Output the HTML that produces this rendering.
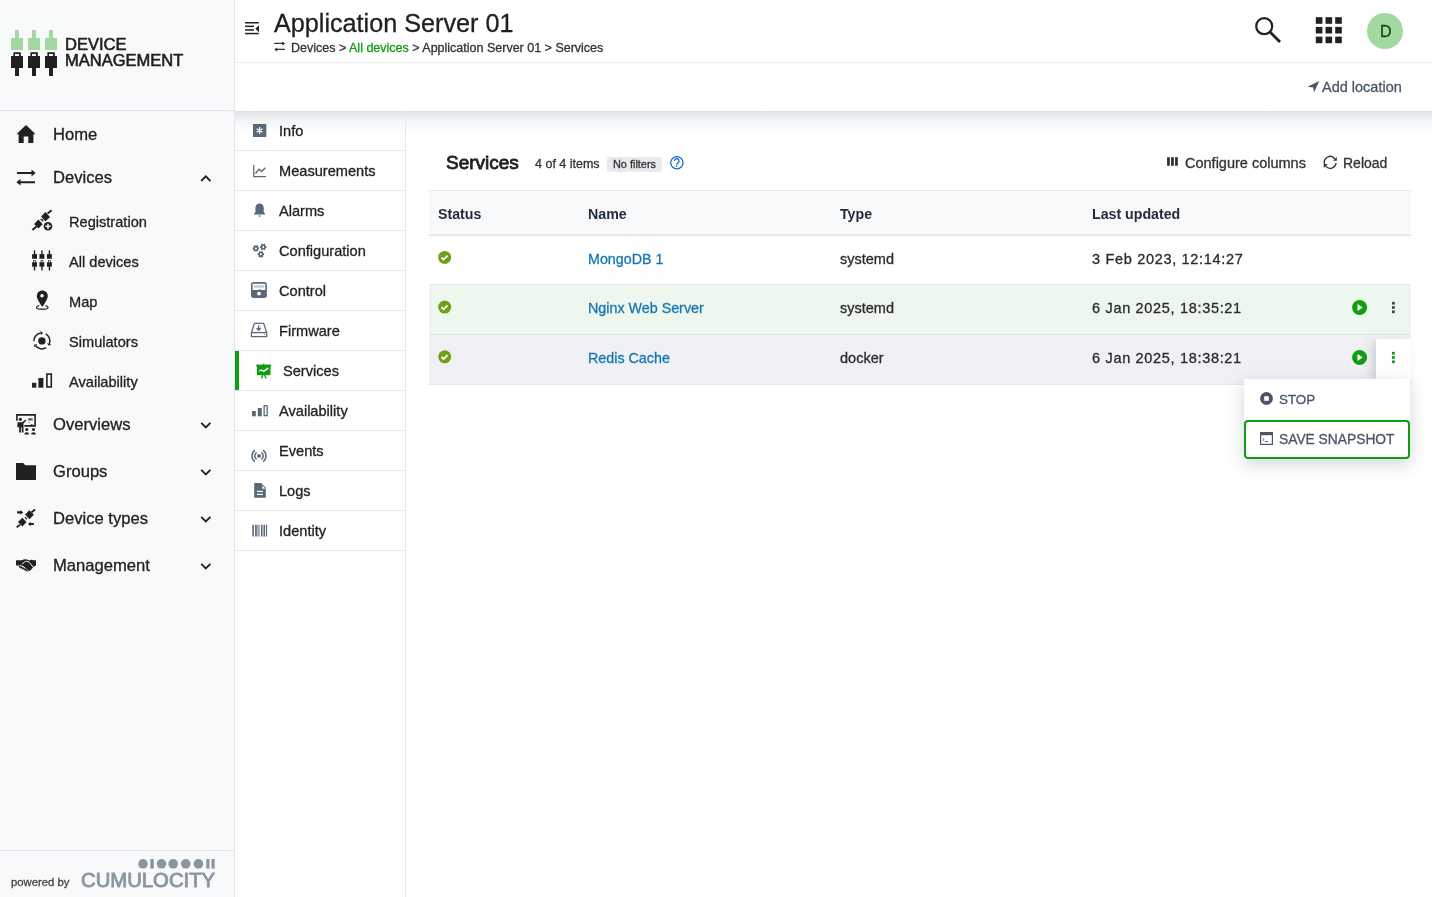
<!DOCTYPE html>
<html><head><meta charset="utf-8"><title>Services - Device Management</title>
<style>
html,body{margin:0;padding:0;width:1432px;height:897px;overflow:hidden;background:#fff;font-family:"Liberation Sans", sans-serif}
.t{position:absolute;line-height:1;white-space:nowrap;will-change:transform;-webkit-text-stroke:0.3px currentColor}
svg.ov{position:absolute;left:0;top:0;width:1432px;height:897px;pointer-events:none;overflow:visible}
</style></head><body>
<div style="position:absolute;left:0px;top:0px;width:234px;height:897px;background:#f8f9fb"></div>
<div style="position:absolute;left:234px;top:0px;width:1px;height:897px;background:#e4e6ea"></div>
<div style="position:absolute;left:0px;top:110px;width:234px;height:1px;background:#e4e6ea"></div>
<div style="position:absolute;left:0px;top:850px;width:234px;height:1px;background:#e4e6ea"></div>
<div class="t" style="left:65.3px;top:36px;font-size:16.5px;color:#1f1f1f;-webkit-text-stroke:0.6px #1f1f1f;">DEVICE</div>
<div class="t" style="left:65.3px;top:52px;font-size:16.5px;color:#1f1f1f;-webkit-text-stroke:0.6px #1f1f1f;">MANAGEMENT</div>
<div class="t" style="left:53.2px;top:127px;font-size:16.6px;color:#222222;">Home</div>
<div class="t" style="left:53.2px;top:170px;font-size:16.6px;color:#222222;">Devices</div>
<div class="t" style="left:53.2px;top:417px;font-size:16.6px;color:#222222;">Overviews</div>
<div class="t" style="left:53.2px;top:464px;font-size:16.6px;color:#222222;">Groups</div>
<div class="t" style="left:53.2px;top:511px;font-size:16.6px;color:#222222;">Device types</div>
<div class="t" style="left:53.2px;top:558px;font-size:16.6px;color:#222222;">Management</div>
<div class="t" style="left:68.8px;top:215px;font-size:14.6px;color:#222222;">Registration</div>
<div class="t" style="left:68.8px;top:255px;font-size:14.6px;color:#222222;">All devices</div>
<div class="t" style="left:68.8px;top:295px;font-size:14.6px;color:#222222;">Map</div>
<div class="t" style="left:68.8px;top:335px;font-size:14.6px;color:#222222;">Simulators</div>
<div class="t" style="left:68.8px;top:375px;font-size:14.6px;color:#222222;">Availability</div>
<div class="t" style="left:11px;top:877px;font-size:11.3px;color:#444;">powered by</div>
<div class="t" style="left:80.5px;top:870px;font-size:20.3px;color:#8996a2;-webkit-text-stroke:0.85px #8996a2;">CUMULOCITY</div>
<div style="position:absolute;left:235px;top:0px;width:1197px;height:62px;background:#fff"></div>
<div style="position:absolute;left:235px;top:62px;width:1197px;height:1px;background:#eceef1"></div>
<div style="position:absolute;left:235px;top:63px;width:1197px;height:47px;background:#fff"></div>
<div style="position:absolute;left:235px;top:111px;width:1197px;height:26px;background:linear-gradient(to bottom, rgba(214,218,225,0.85) 0%, rgba(222,226,231,0.7) 15%, rgba(236,238,241,0.55) 40%, rgba(246,247,248,0.45) 65%, rgba(255,255,255,0) 100%)"></div>
<div class="t" style="left:274px;top:11px;font-size:25.2px;color:#1f1f1f;">Application Server 01</div>
<div class="t" style="left:291px;top:42px;font-size:12.5px;color:#333;">Devices &gt; <span style="color:#129c12">All devices</span> &gt; Application Server 01 &gt; Services</div>
<svg class="ov" width="1432" height="897" viewBox="0 0 1432 897"><path fill="#a3d9a1" d="M15,30h4v8h4v12h-12v-12h4z"/><path fill="#212121" fill-rule="evenodd" d="M13.4,52.3h7.4v3.7h2.2v12h-4v8h-4v-8h-4v-12h2.4z M15,54h4v2h-4z"/><path fill="#a3d9a1" d="M32,30h4v8h4v12h-12v-12h4z"/><path fill="#212121" fill-rule="evenodd" d="M30.4,52.3h7.4v3.7h2.2v12h-4v8h-4v-8h-4v-12h2.4z M32,54h4v2h-4z"/><path fill="#a3d9a1" d="M49,30h4v8h4v12h-12v-12h4z"/><path fill="#212121" fill-rule="evenodd" d="M47.4,52.3h7.4v3.7h2.2v12h-4v8h-4v-8h-4v-12h2.4z M49,54h4v2h-4z"/><path d="M201.2,181L205.8,176.3L210.4,181" fill="none" stroke="#212121" stroke-width="1.8"/><path d="M201.2,422.9L205.8,427.5L210.4,422.9" fill="none" stroke="#212121" stroke-width="1.8"/><path d="M201.2,469.9L205.8,474.5L210.4,469.9" fill="none" stroke="#212121" stroke-width="1.8"/><path d="M201.2,516.9L205.8,521.5L210.4,516.9" fill="none" stroke="#212121" stroke-width="1.8"/><path d="M201.2,563.9L205.8,568.5L210.4,563.9" fill="none" stroke="#212121" stroke-width="1.8"/><path fill="#212121" d="M26,125L35.6,134.2H33.4V143H28.3V136.5H23.7V143H18.6V134.2H16.4Z"/><path fill="none" stroke="#212121" stroke-width="2" d="M17,173H32.5M19.5,182.2H35"/><path fill="#212121" d="M31.5,169.6L35.6,173L31.5,176.4Z M20.5,178.8L16.4,182.2L20.5,185.6Z"/><g fill="#212121"><path d="M45.45,212.1L50,216.9L45.45,221.45L41.1,216.6Z"/><path d="M47.6,213.6L51.6,210.2" stroke="#212121" stroke-width="2"/><path d="M38.4,219.4L42.7,224.2L38.4,228.6L34.1,224.1Z"/><path d="M40.2,219.4L41.5,218.2L43.6,220.4L42.4,221.7Z"/><path d="M36.4,226.6L32.4,229.9" stroke="#212121" stroke-width="2"/><circle cx="48" cy="226.3" r="4.3"/></g><path d="M48,223.7v5.2M45.4,226.3h5.2" stroke="#f8f9fb" stroke-width="1.5"/><path d="M41.2,219.8l0.9,0.9" stroke="#f8f9fb" stroke-width="0.8"/><g fill="#212121"><rect x="33.849999999999994" y="250.4" width="1.4" height="4"/><rect x="32.099999999999994" y="254.1" width="4.9" height="4.7"/><path fill-rule="evenodd" d="M33.25,260.3h2.6v1.9h1.15v4.5h-4.9v-4.5h1.15z M33.949999999999996,261h1.2v1.2h-1.2z"/><rect x="33.849999999999994" y="266.5" width="1.4" height="4"/></g><g fill="#212121"><rect x="41.199999999999996" y="250.4" width="1.4" height="4"/><rect x="39.449999999999996" y="254.1" width="4.9" height="4.7"/><path fill-rule="evenodd" d="M40.6,260.3h2.6v1.9h1.15v4.5h-4.9v-4.5h1.15z M41.3,261h1.2v1.2h-1.2z"/><rect x="41.199999999999996" y="266.5" width="1.4" height="4"/></g><g fill="#212121"><rect x="48.699999999999996" y="250.4" width="1.4" height="4"/><rect x="46.949999999999996" y="254.1" width="4.9" height="4.7"/><path fill-rule="evenodd" d="M48.1,260.3h2.6v1.9h1.15v4.5h-4.9v-4.5h1.15z M48.8,261h1.2v1.2h-1.2z"/><rect x="48.699999999999996" y="266.5" width="1.4" height="4"/></g><path fill="#212121" d="M42.3,290.5c-3,0-5.5,2.4-5.5,5.4c0,3.8,5.5,10.9,5.5,10.9s5.5-7.1,5.5-10.9c0-3-2.5-5.4-5.5-5.4z"/><circle cx="42" cy="295.8" r="1.75" fill="#f8f9fb"/><path d="M39.2,305.6c-1.8,0.4-2.7,1-2.7,1.8c0,1,2.6,1.8,5.8,1.8s5.8-0.8,5.8-1.8c0-0.8-0.9-1.4-2.7-1.8" fill="none" stroke="#212121" stroke-width="1.2"/><circle cx="41.9" cy="340.9" r="3.7" fill="#212121"/><path d="M33.90,341.18A8.0,8.0 0 0 1 40.79,332.98" fill="none" stroke="#212121" stroke-width="1.5"/><path d="M42.74,332.94L40.47,330.70L41.11,335.26Z" fill="#212121"/><path d="M45.66,333.84A8.0,8.0 0 0 1 49.32,343.90" fill="none" stroke="#212121" stroke-width="1.5"/><path d="M48.37,345.60L51.45,344.76L47.18,343.04Z" fill="#212121"/><path d="M46.14,347.68A8.0,8.0 0 0 1 35.60,345.83" fill="none" stroke="#212121" stroke-width="1.5"/><path d="M34.59,344.15L33.78,347.24L37.41,344.41Z" fill="#212121"/><g fill="#212121"><rect x="32" y="382.8" width="4.3" height="4.9"/><rect x="38.4" y="378" width="5" height="9.7"/></g><rect x="46.9" y="374.1" width="4.4" height="12.8" fill="none" stroke="#212121" stroke-width="1.6"/><g fill="#212121"><path d="M16.1,414.1H35.9V426.7H24.3V425.1H34.3V415.7H17.7V420.8H16.1Z"/><circle cx="20.4" cy="419.3" r="1.6"/><path d="M17.6,422.3h4.5l3.4,-2.7l0.8,0.9l-2.8,3.1v9h-1.7v-5h-0.9v5h-1.8v-6.4l-0.7,1.4l-1.2,-0.5z"/><rect x="28.2" y="418.3" width="4.5" height="2.2" opacity="0.75"/><rect x="28.4" y="421.9" width="1.4" height="0.6"/><path d="M30.5,425.1l1.2,-1.2l1.5,1.2z"/><circle cx="26.8" cy="429.4" r="1.5"/><circle cx="33.5" cy="429.4" r="1.5"/><path d="M24.3,434.5a2.4,2.2 0 0 1 4.8,0z M31.1,434.5a2.4,2.2 0 0 1 4.8,0z"/></g><path fill="#212121" d="M16,463H23.2L25.2,465.2H36V480H16Z"/><g fill="#212121"><path d="M17.1,511.2h3.3v-1.2l2.8,2.4l-2.8,2.4v-1.2h-3.3z"/><path d="M33.8,523.1h-3.2v-1.3l-2.6,2.2l2.6,2.2v-1.3h3.2z"/><path d="M29.4,510.3L33.9,514.8L29.4,519.2L25.1,514.6Z"/><path d="M31.6,512.3L35.1,509.5" stroke="#212121" stroke-width="1.9"/><path d="M22.3,517.8L26.6,522L22.3,526.6L18,522Z"/><path d="M24.5,517.6L25.5,516.8L27.3,518.8L26.4,519.8Z"/><path d="M20,524.6L16.7,527.4" stroke="#212121" stroke-width="1.9"/></g><path fill="#212121" d="M16,560.3L21.8,560.3C23.5,559.3 25.5,559 27,559.6L29.2,560.4C30.5,559.6 32,559.5 33.5,560.3L36,560.3V565.6L34.2,566.3L30.8,569.9L29,571.2L23.6,566.2L20.5,565.3L16,565.6Z"/><path d="M22.2,564.2C23.5,562.4 25,561.4 26.5,561.3C27.6,561.2 28.6,561.7 29.3,562.3L33.4,567.6" fill="none" stroke="#f8f9fb" stroke-width="1"/><path d="M19.2,566.3L20.6,567.7M21.1,566.9L22.9,568.8M23.1,567.9L25,569.9M25.2,569L27.1,571.1" fill="none" stroke="#212121" stroke-width="1.35" stroke-linecap="round"/><g fill="#8996a2"><circle cx="143" cy="863.8" r="4.8"/><rect x="150.3" y="859" width="3.5" height="9.6"/><circle cx="161.5" cy="863.8" r="4.8"/><circle cx="173.2" cy="863.8" r="4.8"/><circle cx="185.8" cy="863.8" r="4.8"/><circle cx="198.4" cy="863.8" r="4.8"/><rect x="206.3" y="859" width="3.2" height="9.6"/><rect x="211.5" y="859" width="3.2" height="9.6"/></g><g fill="#212121"><rect x="245" y="22" width="13.8" height="1.5"/><rect x="245" y="25.6" width="9" height="1.5"/><rect x="245" y="29.2" width="9" height="1.5"/><rect x="245" y="32.8" width="13.8" height="1.5"/><path d="M259,25.3v7L255.3,28.8z"/></g><path fill="none" stroke="#333" stroke-width="1.3" d="M274.2,43.4H283M276.2,49.4H285"/><path fill="#333" d="M282.2,41.4L285.2,43.4L282.2,45.4Z M277.2,47.4L274.2,49.4L277.2,51.4Z"/><circle cx="1264.2" cy="26.2" r="8" fill="none" stroke="#212121" stroke-width="2.2"/><path d="M1270,32L1280,42" stroke="#212121" stroke-width="2.8"/><rect x="1315.8" y="17.2" width="6.6" height="6.6" fill="#212121"/><rect x="1315.8" y="26.9" width="6.6" height="6.6" fill="#212121"/><rect x="1315.8" y="36.599999999999994" width="6.6" height="6.6" fill="#212121"/><rect x="1325.5" y="17.2" width="6.6" height="6.6" fill="#212121"/><rect x="1325.5" y="26.9" width="6.6" height="6.6" fill="#212121"/><rect x="1325.5" y="36.599999999999994" width="6.6" height="6.6" fill="#212121"/><rect x="1335.2" y="17.2" width="6.6" height="6.6" fill="#212121"/><rect x="1335.2" y="26.9" width="6.6" height="6.6" fill="#212121"/><rect x="1335.2" y="36.599999999999994" width="6.6" height="6.6" fill="#212121"/><circle cx="1385" cy="31" r="18" fill="#a3d9a1"/><path fill="#4a5668" d="M1319.3,80.9L1307.5,86.7L1313.2,87.5L1314,92.5Z"/></svg>
<div class="t" style="left:1379.7px;top:24px;font-size:16px;color:#0a4d0a;">D</div>
<div class="t" style="left:1322.2px;top:80px;font-size:14.5px;color:#4a5668;">Add location</div>
<div style="position:absolute;left:405px;top:110px;width:1px;height:787px;background:#e8eaed"></div>
<div style="position:absolute;left:235px;top:150px;width:170px;height:1px;background:#e8eaed"></div>
<div class="t" style="left:278.8px;top:124px;font-size:14.6px;color:#222222;">Info</div>
<div style="position:absolute;left:235px;top:190px;width:170px;height:1px;background:#e8eaed"></div>
<div class="t" style="left:278.8px;top:164px;font-size:14.6px;color:#222222;">Measurements</div>
<div style="position:absolute;left:235px;top:230px;width:170px;height:1px;background:#e8eaed"></div>
<div class="t" style="left:278.8px;top:204px;font-size:14.6px;color:#222222;">Alarms</div>
<div style="position:absolute;left:235px;top:270px;width:170px;height:1px;background:#e8eaed"></div>
<div class="t" style="left:278.8px;top:244px;font-size:14.6px;color:#222222;">Configuration</div>
<div style="position:absolute;left:235px;top:310px;width:170px;height:1px;background:#e8eaed"></div>
<div class="t" style="left:278.8px;top:284px;font-size:14.6px;color:#222222;">Control</div>
<div style="position:absolute;left:235px;top:350px;width:170px;height:1px;background:#e8eaed"></div>
<div class="t" style="left:278.8px;top:324px;font-size:14.6px;color:#222222;">Firmware</div>
<div style="position:absolute;left:235px;top:390px;width:170px;height:1px;background:#e8eaed"></div>
<div style="position:absolute;left:235px;top:351px;width:4px;height:39px;background:#129c12"></div>
<div class="t" style="left:282.8px;top:364px;font-size:14.6px;color:#222222;">Services</div>
<div style="position:absolute;left:235px;top:430px;width:170px;height:1px;background:#e8eaed"></div>
<div class="t" style="left:278.8px;top:404px;font-size:14.6px;color:#222222;">Availability</div>
<div style="position:absolute;left:235px;top:470px;width:170px;height:1px;background:#e8eaed"></div>
<div class="t" style="left:278.8px;top:444px;font-size:14.6px;color:#222222;">Events</div>
<div style="position:absolute;left:235px;top:510px;width:170px;height:1px;background:#e8eaed"></div>
<div class="t" style="left:278.8px;top:484px;font-size:14.6px;color:#222222;">Logs</div>
<div style="position:absolute;left:235px;top:550px;width:170px;height:1px;background:#e8eaed"></div>
<div class="t" style="left:278.8px;top:524px;font-size:14.6px;color:#222222;">Identity</div>
<div class="t" style="left:446px;top:153px;font-size:19px;color:#1f1f1f;-webkit-text-stroke:0.8px #1f1f1f;">Services</div>
<div class="t" style="left:534.7px;top:158px;font-size:12.5px;color:#333;">4 of 4 items</div>
<div style="position:absolute;left:607px;top:157px;width:55px;height:15px;background:#e8eaed;border-radius:3px"></div>
<div class="t" style="left:612.8px;top:159px;font-size:10.9px;color:#333;">No filters</div>
<div class="t" style="left:1185px;top:156px;font-size:14.5px;color:#333;">Configure columns</div>
<div class="t" style="left:1342.6px;top:156px;font-size:14px;color:#333;">Reload</div>
<div style="position:absolute;left:429px;top:190px;width:982px;height:1px;background:#e6e9ec"></div>
<div style="position:absolute;left:429px;top:191px;width:982px;height:43px;background:#f8f9fb"></div>
<div style="position:absolute;left:429px;top:234px;width:982px;height:2px;background:#e3e7ea"></div>
<div class="t" style="left:437.8px;top:207px;font-size:14.2px;color:#1d2b3a;font-weight:700;-webkit-text-stroke:0;">Status</div>
<div class="t" style="left:588.2px;top:207px;font-size:14.2px;color:#1d2b3a;font-weight:700;-webkit-text-stroke:0;">Name</div>
<div class="t" style="left:840.3px;top:207px;font-size:14.2px;color:#1d2b3a;font-weight:700;-webkit-text-stroke:0;">Type</div>
<div class="t" style="left:1092px;top:207px;font-size:14.2px;color:#1d2b3a;font-weight:700;-webkit-text-stroke:0;">Last updated</div>
<div style="position:absolute;left:429px;top:236px;width:982px;height:48px;background:#ffffff"></div>
<div style="position:absolute;left:429px;top:284px;width:982px;height:1px;background:#e4e7ea"></div>
<div class="t" style="left:587.8px;top:252px;font-size:14.3px;color:#1776b5;">MongoDB 1</div>
<div class="t" style="left:840.3px;top:252px;font-size:14.5px;color:#2b2b2b;">systemd</div>
<div class="t" style="left:1092px;top:252px;font-size:14.5px;color:#2b2b2b;letter-spacing:0.68px;">3 Feb 2023, 12:14:27</div>
<div style="position:absolute;left:429px;top:285px;width:982px;height:49px;background:#eef7ee"></div>
<div style="position:absolute;left:429px;top:334px;width:982px;height:1px;background:#e4e7ea"></div>
<div class="t" style="left:587.8px;top:301px;font-size:14.3px;color:#1776b5;">Nginx Web Server</div>
<div class="t" style="left:840.3px;top:301px;font-size:14.5px;color:#2b2b2b;">systemd</div>
<div class="t" style="left:1092px;top:301px;font-size:14.5px;color:#2b2b2b;letter-spacing:0.68px;">6 Jan 2025, 18:35:21</div>
<div style="position:absolute;left:429px;top:335px;width:982px;height:49px;background:#f0f1f4"></div>
<div style="position:absolute;left:429px;top:384px;width:982px;height:1px;background:#e4e7ea"></div>
<div class="t" style="left:587.8px;top:351px;font-size:14.3px;color:#1776b5;">Redis Cache</div>
<div class="t" style="left:840.3px;top:351px;font-size:14.5px;color:#2b2b2b;">docker</div>
<div class="t" style="left:1092px;top:351px;font-size:14.5px;color:#2b2b2b;letter-spacing:0.68px;">6 Jan 2025, 18:38:21</div>
<svg class="ov" width="1432" height="897" viewBox="0 0 1432 897"><rect x="253" y="124" width="13.3" height="13" fill="#5a697a"/><path d="M259.6,127v7M256.6,128.8l6,3.5M256.6,132.3l6,-3.5" stroke="#fff" stroke-width="1.2"/><path d="M253.8,165V176.6H266M255.5,173.5l3.5,-4.2l2.5,2.2l3.8,-3.8" fill="none" stroke="#5a697a" stroke-width="1.3"/><path fill="#5a697a" d="M259.6,203.5c-2.5,0-4.2,2-4.2,4.5v4l-1.3,1.8v0.8h11v-0.8l-1.3,-1.8v-4c0-2.5-1.7,-4.5,-4.2,-4.5z M258.4,215.5h2.4a1.2,1.2 0 0 1 -2.4,0z"/><g fill="#5a697a"><rect x="255.05" y="245.25" width="1.7" height="6.3" transform="rotate(30,255.9,248.4)"/><rect x="255.05" y="245.25" width="1.7" height="6.3" transform="rotate(90,255.9,248.4)"/><rect x="255.05" y="245.25" width="1.7" height="6.3" transform="rotate(150,255.9,248.4)"/><rect x="255.05" y="245.25" width="1.7" height="6.3" transform="rotate(210,255.9,248.4)"/><rect x="255.05" y="245.25" width="1.7" height="6.3" transform="rotate(270,255.9,248.4)"/><rect x="255.05" y="245.25" width="1.7" height="6.3" transform="rotate(330,255.9,248.4)"/><circle cx="255.9" cy="248.4" r="2.3"/></g><circle cx="255.9" cy="248.4" r="1.0" fill="#fff"/><g fill="#5a697a"><rect x="262.35" y="243.75" width="1.7" height="6.3" transform="rotate(30,263.2,246.9)"/><rect x="262.35" y="243.75" width="1.7" height="6.3" transform="rotate(90,263.2,246.9)"/><rect x="262.35" y="243.75" width="1.7" height="6.3" transform="rotate(150,263.2,246.9)"/><rect x="262.35" y="243.75" width="1.7" height="6.3" transform="rotate(210,263.2,246.9)"/><rect x="262.35" y="243.75" width="1.7" height="6.3" transform="rotate(270,263.2,246.9)"/><rect x="262.35" y="243.75" width="1.7" height="6.3" transform="rotate(330,263.2,246.9)"/><circle cx="263.2" cy="246.9" r="2.3"/></g><circle cx="263.2" cy="246.9" r="1.0" fill="#fff"/><g fill="#5a697a"><rect x="260.05" y="251.15" width="1.7" height="6.3" transform="rotate(30,260.9,254.3)"/><rect x="260.05" y="251.15" width="1.7" height="6.3" transform="rotate(90,260.9,254.3)"/><rect x="260.05" y="251.15" width="1.7" height="6.3" transform="rotate(150,260.9,254.3)"/><rect x="260.05" y="251.15" width="1.7" height="6.3" transform="rotate(210,260.9,254.3)"/><rect x="260.05" y="251.15" width="1.7" height="6.3" transform="rotate(270,260.9,254.3)"/><rect x="260.05" y="251.15" width="1.7" height="6.3" transform="rotate(330,260.9,254.3)"/><circle cx="260.9" cy="254.3" r="2.3"/></g><circle cx="260.9" cy="254.3" r="1.0" fill="#fff"/><rect x="251" y="282.1" width="15.9" height="15.8" rx="2.6" fill="#5a697a"/><path d="M252.6,283.8h12.7v6.2h-4.8l-0.9,-1.3l-0.9,1.3h-6.1z" fill="#fff"/><path d="M254.5,285.3v1.2M256.8,284.9v1.2M259.1,284.7v1.2M261.4,284.9v1.2M263.6,285.3v1.2M254.2,286.9h9.7" stroke="#5a697a" stroke-width="0.6"/><circle cx="259" cy="293.6" r="1.9" fill="#fff"/><path d="M254.4,323.4h9.3l3,9.3v4h-15.3v-4z" fill="none" stroke="#5a697a" stroke-width="1.3" stroke-linejoin="round"/><path d="M251.6,332.6h15" stroke="#5a697a" stroke-width="1.3"/><path d="M258.7,325.3v4.8M256.6,328l2.1,2.2l2.1,-2.2" fill="none" stroke="#5a697a" stroke-width="1.3"/><circle cx="264.5" cy="334.6" r="0.5" fill="#5a697a"/><g fill="#129c12"><rect x="256.2" y="364.6" width="15" height="1.8"/><rect x="256.9" y="365.5" width="13.6" height="9.7"/><rect x="263.1" y="363.6" width="1.2" height="1.5"/></g><path d="M262.8,375l-1.5,3.4M264.6,375l1.5,3.4" stroke="#129c12" stroke-width="1.3"/><path d="M259.4,371.3l1.9,-1.3l2.3,1.4l1.8,-1.3l2.8,-2" fill="none" stroke="#fff" stroke-width="1.3"/><g fill="#5a697a"><rect x="252" y="411" width="3.8" height="5.3"/><rect x="257.8" y="408" width="4" height="8.3"/></g><rect x="264.15" y="405.75" width="3" height="9.9" fill="none" stroke="#5a697a" stroke-width="1.3"/><circle cx="259" cy="455.9" r="1.9" fill="#5a697a"/><path d="M256.59,452.46A4.2,4.2 0 0 0 256.59,459.34M261.41,452.46A4.2,4.2 0 0 1 261.41,459.34M254.98,450.17A7.0,7.0 0 0 0 254.98,461.63M263.02,450.17A7.0,7.0 0 0 1 263.02,461.63" fill="none" stroke="#5a697a" stroke-width="1.5"/><path fill="#5a697a" d="M254.2,483.1h6.9l4.7,4.6v10.1h-11.6z"/><path d="M262.3,485.4v3.3h3.1z" fill="#fff"/><path d="M257,491.35h5.85M257,494.4h5.85" stroke="#fff" stroke-width="1.3"/><g fill="#5a697a"><rect x="252.3" y="524.8" width="1.6" height="11.7"/><rect x="255.1" y="524.8" width="1.7" height="11.7"/><rect x="257.2" y="524.8" width="2.6" height="11.7" opacity="0.6"/><rect x="261" y="524.8" width="1.4" height="11.7"/><rect x="262.6" y="524.8" width="1.2" height="11.7" opacity="0.6"/><rect x="263.9" y="524.8" width="1.1" height="11.7"/><rect x="265.9" y="524.8" width="1.2" height="11.7"/></g><circle cx="676.9" cy="162.7" r="6.15" fill="none" stroke="#1467d6" stroke-width="1.3"/><path d="M674.5,160.9a2.2,2.2 0 1 1 3.5,1.8c-0.8,0.55-1.3,1.05-1.3,1.9v0.2" fill="none" stroke="#1467d6" stroke-width="1.35"/><circle cx="676.7" cy="166.1" r="0.8" fill="#1467d6"/><g fill="#2f2f2f"><rect x="1167.1" y="157.2" width="2.7" height="8.6"/><rect x="1171.1" y="157.2" width="2.7" height="8.6"/><rect x="1175.1" y="157.2" width="2.7" height="8.6"/></g><path d="M1324.66,164.42A5.9,5.9 0 0 1 1334.85,158.77M1336.08,162.91A5.9,5.9 0 0 1 1325.68,166.19" fill="none" stroke="#2f2f2f" stroke-width="1.35"/><path fill="#2f2f2f" d="M1333,160.7H1336.8V156.9Z M1327.6,164.1H1323.8V167.9Z"/><circle cx="444.7" cy="257.4" r="6.5" fill="#6ea117"/><path d="M441.5,257.5l2.1,2.1l3.9,-3.9" fill="none" stroke="#fff" stroke-width="1.8"/><circle cx="444.7" cy="307.1" r="6.5" fill="#6ea117"/><path d="M441.5,307.2l2.1,2.1l3.9,-3.9" fill="none" stroke="#fff" stroke-width="1.8"/><circle cx="444.7" cy="356.8" r="6.5" fill="#6ea117"/><path d="M441.5,356.9l2.1,2.1l3.9,-3.9" fill="none" stroke="#fff" stroke-width="1.8"/></svg>
<div style="position:absolute;left:1376px;top:339px;width:35px;height:40px;background:#fff;box-shadow:-4px 3px 9px rgba(60,70,90,0.2)"></div>
<svg class="ov" width="1432" height="897" viewBox="0 0 1432 897"><circle cx="1359.6" cy="307.5" r="7.5" fill="#129c12"/><path fill="#fff" d="M1357.5,304.0L1362.7,307.5L1357.5,311.0Z"/><rect x="1392" y="301.84999999999997" width="2.8" height="2.7" fill="#3d4757"/><rect x="1392" y="306.15" width="2.8" height="2.7" fill="#3d4757"/><rect x="1392" y="310.45" width="2.8" height="2.7" fill="#3d4757"/><circle cx="1359.6" cy="357.5" r="7.5" fill="#129c12"/><path fill="#fff" d="M1357.5,354.0L1362.7,357.5L1357.5,361.0Z"/><rect x="1392" y="351.84999999999997" width="2.8" height="2.7" fill="#129c12"/><rect x="1392" y="356.15" width="2.8" height="2.7" fill="#129c12"/><rect x="1392" y="360.45" width="2.8" height="2.7" fill="#129c12"/></svg>
<div style="position:absolute;left:1244px;top:379px;width:166px;height:80px;background:#fff;box-shadow:0 5px 16px rgba(60,70,90,0.22)"></div>
<div style="position:absolute;left:1244px;top:420px;width:166px;height:39px;box-sizing:border-box;border:2px solid #129c12;border-radius:4px"></div>
<div class="t" style="left:1278.7px;top:393px;font-size:13.4px;color:#4a5668;">STOP</div>
<div class="t" style="left:1278.7px;top:433px;font-size:13.8px;color:#4a5668;">SAVE SNAPSHOT</div>
<svg class="ov" width="1432" height="897" viewBox="0 0 1432 897"><circle cx="1266.5" cy="398.5" r="6.4" fill="#4a5668"/><rect x="1264.2" y="396.2" width="4.6" height="4.6" fill="#fff"/><rect x="1260.6" y="432.6" width="11.8" height="11.8" fill="none" stroke="#4a5668" stroke-width="1.2"/><rect x="1260" y="432" width="13" height="3.2" fill="#4a5668"/><path d="M1262.6,438.4l1.6,1.2l-1.6,1.2M1265,441.6h3" fill="none" stroke="#4a5668" stroke-width="0.9"/></svg>
</body></html>
